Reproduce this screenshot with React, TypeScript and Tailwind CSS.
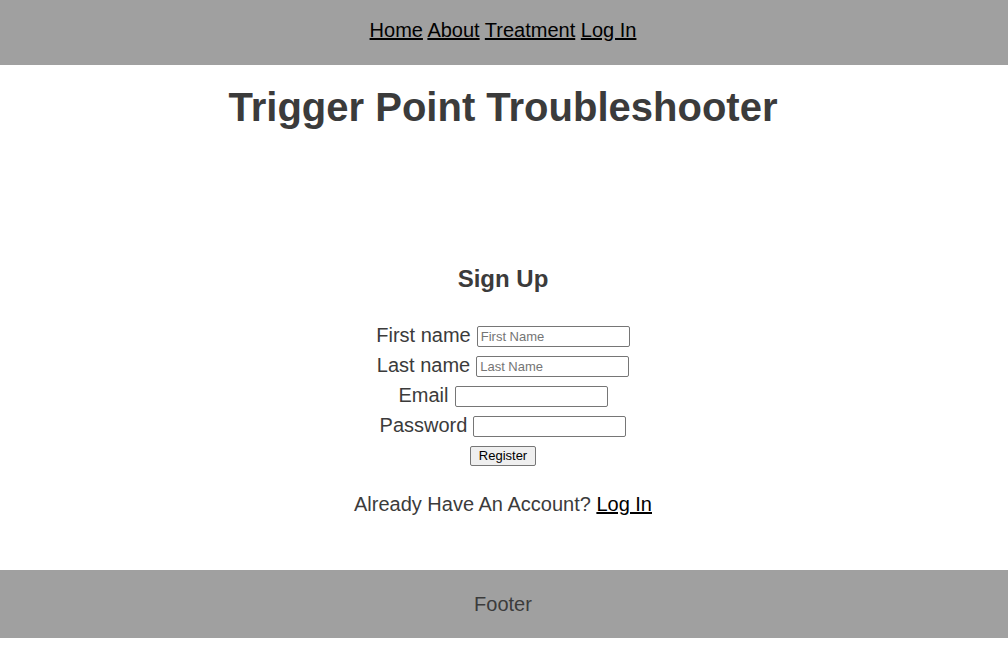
import React from "react";

const fields = [
  { label: "First name", placeholder: "First Name", type: "text" },
  { label: "Last name", placeholder: "Last Name", type: "text" },
  { label: "Email", placeholder: "", type: "email" },
  { label: "Password", placeholder: "", type: "password" },
];

const App = () => {
  return (
    <div className="min-h-[646px] bg-white font-['Liberation_Sans',Arial,sans-serif] text-[#3b3b3b]">
      {/* NAV */}
      <nav className="h-[65px] bg-[#a0a0a0] pr-[2px] pt-[17px] text-center text-[20px] leading-[26px] text-black">
        <a href="#" className="underline">Home</a>{" "}
        <a href="#" className="underline">About</a>{" "}
        <a href="#" className="underline">Treatment</a>{" "}
        <a href="#" className="underline">Log In</a>
      </nav>

      {/* TITLE */}
      <h1 className="mt-[17px] pr-[2px] text-center text-[40px] font-bold leading-[50px]">
        Trigger Point Troubleshooter
      </h1>

      {/* SIGN UP FORM */}
      <section className="mt-[133px] pr-[2px] text-center">
        <h2 className="text-[24px] font-bold leading-[28px]">Sign Up</h2>
        <form className="mt-[27px] flex flex-col items-center text-[20px] leading-[30px]">
          {fields.map((f) => (
            <div key={f.label} className="flex h-[30px] items-center">
              <span>{f.label}</span>
              <input
                type={f.type}
                placeholder={f.placeholder}
                className="ml-[6px] mt-[2px] h-[21px] w-[153px] rounded-[2px] border border-[#767676] bg-white px-[3px] text-[13px] leading-[15px] text-black placeholder:text-[#757575]"
              />
            </div>
          ))}
          <div className="flex h-[30px] items-center pt-[2px]">
            <button
              type="button"
              className="h-[20px] rounded-[2px] border border-[#767676] bg-[#efefef] px-[8px] text-[13px] leading-[16px] text-black"
            >
              Register
            </button>
          </div>
        </form>
        <p className="mt-[19px] text-[20px] leading-[30px]">
          Already Have An Account?{" "}
          <a href="#" className="text-black underline">Log In</a>
        </p>
      </section>

      {/* FOOTER */}
      <footer className="mt-[51px] flex h-[68px] items-center justify-center bg-[#a0a0a0] pr-[2px] text-[20px]">
        Footer
      </footer>
    </div>
  );
};

export default App;
